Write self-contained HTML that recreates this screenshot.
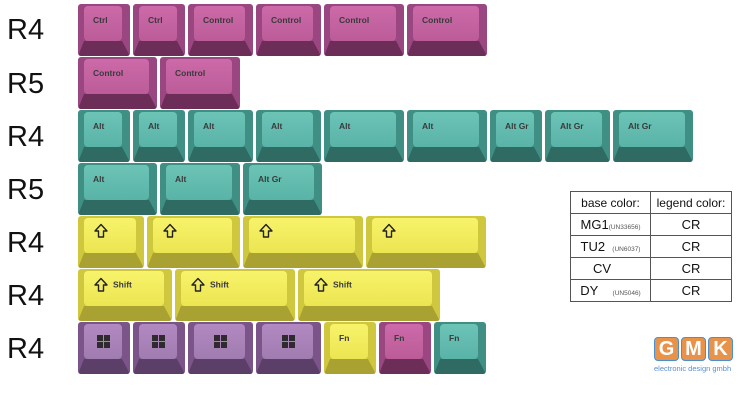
<!DOCTYPE html>
<html><head><meta charset="utf-8"><style>
body{margin:0;width:740px;height:416px;background:#fff;position:relative;overflow:hidden;font-family:"Liberation Sans",sans-serif}
.r{position:absolute;left:7px;font-size:29px;color:#111;line-height:1}
.k{position:absolute;height:52px;border-radius:3px;overflow:hidden}
.k:before{content:"";position:absolute;left:0;right:0;bottom:0;height:15px;clip-path:polygon(6px 0,calc(100% - 8px) 0,100% 100%,0 100%)}
.t{position:absolute;left:6px;right:8px;top:2px;bottom:15px;border-radius:4px;font-size:8.5px;font-weight:bold;color:#3a3a3a;padding:9px 0 0 9px;box-sizing:border-box;white-space:nowrap}
.m{background:#9a4680}.m:before{background:#6c2e58}.m .t{background:linear-gradient(#cd6aa9,#bb5c98)}
.c{background:#3f8f85}.c:before{background:#2f6b63}.c .t{background:linear-gradient(#6cc4b7,#59b3a6)}
.y{background:#cfc83e}.y:before{background:#a9a232}.y .t{background:linear-gradient(#f7f36a,#ece552)}
.p{background:#7b5589}.p:before{background:#5c3f68}.p .t{background:linear-gradient(#b289c1,#a07cb0)}
.ar{display:inline-block;vertical-align:middle;margin-right:4px}
.w{display:inline-block;width:13px;height:13px;margin:5px 0 0 0;background:
linear-gradient(#2e2a30,#2e2a30) 0 0/6px 6px no-repeat,linear-gradient(#2e2a30,#2e2a30) 7px 0/6px 6px no-repeat,linear-gradient(#2e2a30,#2e2a30) 0 7px/6px 6px no-repeat,linear-gradient(#2e2a30,#2e2a30) 7px 7px/6px 6px no-repeat}
table{position:absolute;left:570px;top:191px;border-collapse:collapse;font-size:12px;color:#111}
td{border:1px solid #555;height:21px;padding:0;text-align:center}
small{font-size:6.5px;color:#555}
</style></head><body>
<div class="r" style="top:16px">R4</div>
<div class="r" style="top:70px">R5</div>
<div class="r" style="top:123px">R4</div>
<div class="r" style="top:176px">R5</div>
<div class="r" style="top:229px">R4</div>
<div class="r" style="top:282px">R4</div>
<div class="r" style="top:335px">R4</div>

<div class="k m" style="left:78px;top:4px;width:52px"><div class="t">Ctrl</div></div>
<div class="k m" style="left:133px;top:4px;width:52px"><div class="t">Ctrl</div></div>
<div class="k m" style="left:188px;top:4px;width:65px"><div class="t">Control</div></div>
<div class="k m" style="left:256px;top:4px;width:65px"><div class="t">Control</div></div>
<div class="k m" style="left:324px;top:4px;width:80px"><div class="t">Control</div></div>
<div class="k m" style="left:407px;top:4px;width:80px"><div class="t">Control</div></div>

<div class="k m" style="left:78px;top:57px;width:79px"><div class="t">Control</div></div>
<div class="k m" style="left:160px;top:57px;width:80px"><div class="t">Control</div></div>

<div class="k c" style="left:78px;top:110px;width:52px"><div class="t">Alt</div></div>
<div class="k c" style="left:133px;top:110px;width:52px"><div class="t">Alt</div></div>
<div class="k c" style="left:188px;top:110px;width:65px"><div class="t">Alt</div></div>
<div class="k c" style="left:256px;top:110px;width:65px"><div class="t">Alt</div></div>
<div class="k c" style="left:324px;top:110px;width:80px"><div class="t">Alt</div></div>
<div class="k c" style="left:407px;top:110px;width:80px"><div class="t">Alt</div></div>
<div class="k c" style="left:490px;top:110px;width:52px"><div class="t">Alt Gr</div></div>
<div class="k c" style="left:545px;top:110px;width:65px"><div class="t">Alt Gr</div></div>
<div class="k c" style="left:613px;top:110px;width:80px"><div class="t">Alt Gr</div></div>

<div class="k c" style="left:78px;top:163px;width:79px"><div class="t">Alt</div></div>
<div class="k c" style="left:160px;top:163px;width:80px"><div class="t">Alt</div></div>
<div class="k c" style="left:243px;top:163px;width:79px"><div class="t">Alt Gr</div></div>

<div class="k y" style="left:78px;top:216px;width:66px"><div class="t" style="padding-top:5px"><svg class="ar" width="16" height="16" viewBox="0 0 16 16"><path d="M8 1.5L14 8H10.5V14H5.5V8H2Z" fill="none" stroke="#222" stroke-width="1.4" stroke-linejoin="round"/></svg></div></div>
<div class="k y" style="left:147px;top:216px;width:93px"><div class="t" style="padding-top:5px"><svg class="ar" width="16" height="16" viewBox="0 0 16 16"><path d="M8 1.5L14 8H10.5V14H5.5V8H2Z" fill="none" stroke="#222" stroke-width="1.4" stroke-linejoin="round"/></svg></div></div>
<div class="k y" style="left:243px;top:216px;width:120px"><div class="t" style="padding-top:5px"><svg class="ar" width="16" height="16" viewBox="0 0 16 16"><path d="M8 1.5L14 8H10.5V14H5.5V8H2Z" fill="none" stroke="#222" stroke-width="1.4" stroke-linejoin="round"/></svg></div></div>
<div class="k y" style="left:366px;top:216px;width:120px"><div class="t" style="padding-top:5px"><svg class="ar" width="16" height="16" viewBox="0 0 16 16"><path d="M8 1.5L14 8H10.5V14H5.5V8H2Z" fill="none" stroke="#222" stroke-width="1.4" stroke-linejoin="round"/></svg></div></div>

<div class="k y" style="left:78px;top:269px;width:94px"><div class="t" style="padding-top:6px"><svg class="ar" width="16" height="16" viewBox="0 0 16 16"><path d="M8 1.5L14 8H10.5V14H5.5V8H2Z" fill="none" stroke="#222" stroke-width="1.4" stroke-linejoin="round"/></svg>Shift</div></div>
<div class="k y" style="left:175px;top:269px;width:120px"><div class="t" style="padding-top:6px"><svg class="ar" width="16" height="16" viewBox="0 0 16 16"><path d="M8 1.5L14 8H10.5V14H5.5V8H2Z" fill="none" stroke="#222" stroke-width="1.4" stroke-linejoin="round"/></svg>Shift</div></div>
<div class="k y" style="left:298px;top:269px;width:142px"><div class="t" style="padding-top:6px"><svg class="ar" width="16" height="16" viewBox="0 0 16 16"><path d="M8 1.5L14 8H10.5V14H5.5V8H2Z" fill="none" stroke="#222" stroke-width="1.4" stroke-linejoin="round"/></svg>Shift</div></div>

<div class="k p" style="left:78px;top:322px;width:52px"><div class="t" style="padding:6px 0 0 13px"><span class="w"></span></div></div>
<div class="k p" style="left:133px;top:322px;width:52px"><div class="t" style="padding:6px 0 0 13px"><span class="w"></span></div></div>
<div class="k p" style="left:188px;top:322px;width:65px"><div class="t" style="padding:6px 0 0 20px"><span class="w"></span></div></div>
<div class="k p" style="left:256px;top:322px;width:65px"><div class="t" style="padding:6px 0 0 20px"><span class="w"></span></div></div>
<div class="k y" style="left:324px;top:322px;width:52px"><div class="t">Fn</div></div>
<div class="k m" style="left:379px;top:322px;width:52px"><div class="t">Fn</div></div>
<div class="k c" style="left:434px;top:322px;width:52px"><div class="t">Fn</div></div>

<table>
<tr><td style="width:79px">base color:</td><td style="width:80px">legend color:</td></tr>
<tr><td style="font-size:13px">MG1<small>(UN33656)</small></td><td style="font-size:13px">CR</td></tr>
<tr><td style="font-size:13px">TU2 &nbsp;<small>(UN6037)</small></td><td style="font-size:13px">CR</td></tr>
<tr><td style="font-size:13px;text-align:left;padding-left:22px">CV</td><td style="font-size:13px">CR</td></tr>
<tr><td style="font-size:13px">DY &nbsp;&nbsp;&nbsp;<small>(UN5046)</small></td><td style="font-size:13px">CR</td></tr>
</table>

<div style="position:absolute;left:654px;top:337px;display:flex;gap:2px">
<div style="width:25px;height:24px;background:#e8924a;border:1px solid #4a8fd0;border-radius:4px;box-sizing:border-box;color:#fff;font:bold 20px/22px 'Liberation Sans';text-align:center">G</div>
<div style="width:25px;height:24px;background:#e8924a;border:1px solid #4a8fd0;border-radius:4px;box-sizing:border-box;color:#fff;font:bold 20px/22px 'Liberation Sans';text-align:center">M</div>
<div style="width:25px;height:24px;background:#e8924a;border:1px solid #4a8fd0;border-radius:4px;box-sizing:border-box;color:#fff;font:bold 20px/22px 'Liberation Sans';text-align:center">K</div>
</div>
<div style="position:absolute;left:654px;top:364px;font-size:7.5px;color:#5a8fd0">electronic design gmbh</div>
</body></html>
